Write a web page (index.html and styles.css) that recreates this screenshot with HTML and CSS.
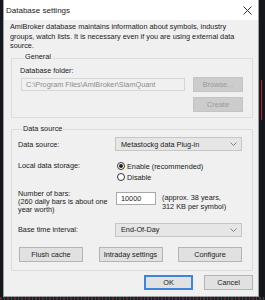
FILE: index.html
```html
<!DOCTYPE html>
<html lang="en">
<head>
  <meta charset="UTF-8">
  <title>Database settings</title>
  <link rel="stylesheet" href="styles.css">
</head>
<body>
  <div class="screen">
    <div class="dialog">
      <div class="titlebar">
        <span class="title">Database settings</span>
        <svg class="close" width="9" height="9" viewBox="0 0 9 9"><path d="M0.5 0.5 L8.5 8.5 M8.5 0.5 L0.5 8.5" stroke="#333" stroke-width="1"/></svg>
      </div>
      <div class="content">
        <p class="intro">AmiBroker database maintains information about symbols, industry<br>groups, watch lists. It is necessary even if you are using external data<br>source.</p>

        <div class="group general">
          <span class="legend">General</span>
          <div class="label">Database folder:</div>
          <div class="folder-row">
            <div class="textbox disabled">C:\Program Files\AmiBroker\SiamQuant</div>
            <div class="side-buttons">
              <button class="btn disabled">Browse...</button>
              <button class="btn disabled">Create</button>
            </div>
          </div>
        </div>

        <div class="group source">
          <span class="legend">Data source</span>
          <div class="row first">
            <div class="label">Data source:</div>
            <div class="combo">
              <span>Metastockg data Plug-in</span>
              <svg width="7" height="4" viewBox="0 0 7 4"><path d="M0.5 0.5 L3.5 3.5 L6.5 0.5" fill="none" stroke="#777" stroke-width="0.9"/></svg>
            </div>
          </div>
          <div class="row storage">
            <div class="label">Local data storage:</div>
            <div class="radios">
              <div class="radio-line"><span class="radio checked"></span>Enable (recommended)</div>
              <div class="radio-line"><span class="radio"></span>Disable</div>
            </div>
          </div>
          <div class="row bars">
            <div class="label">Number of bars:<br>(260 daily bars is about one<br>year worth)</div>
            <div class="textbox number">10000</div>
            <div class="note">(approx. 38 years,<br>312 KB per symbol)</div>
          </div>
          <div class="row interval">
            <div class="label">Base time interval:</div>
            <div class="combo">
              <span>End-Of-Day</span>
              <svg width="7" height="4" viewBox="0 0 7 4"><path d="M0.5 0.5 L3.5 3.5 L6.5 0.5" fill="none" stroke="#777" stroke-width="0.9"/></svg>
            </div>
          </div>
          <div class="button-row">
            <button class="btn">Flush cache</button>
            <button class="btn">Intraday settings</button>
            <button class="btn">Configure</button>
          </div>
        </div>

        <div class="footer">
          <button class="btn default">OK</button>
          <button class="btn">Cancel</button>
        </div>
      </div>
    </div>
    <div class="edge"></div>
  </div>
  <div class="strip"></div>
</body>
</html>
```

FILE: styles.css
```css
body {
  margin: 0;
  width: 265px;
  height: 300px;
  overflow: hidden;
  background: #14181d;
  font-family: 'Liberation Sans', Arial, sans-serif;
  font-size: 7.3px;
  color: #1a1a1a;
}
.screen {
  display: flex;
  height: 297px;
}
.dialog {
  margin-left: 3px;
  width: 256px;
  height: 297px;
  background: #f0f0f0;
  border: 1px solid #a0a0a0;
  border-top: none;
  box-sizing: border-box;
}
.edge {
  width: 1px;
  height: 40px;
  margin: 80px 0 0 2px;
  background: #b3262a;
}
.strip {
  height: 3px;
  background: repeating-linear-gradient(90deg, #5a2630 0 2px, #1a1e24 2px 4px, #2d4a48 4px 5px, #1a1e24 5px 7px);
}
.titlebar {
  height: 20px;
  background: #fff;
  display: flex;
  justify-content: space-between;
  align-items: center;
  padding: 0 6px 0 2px;
}
.title {
  font-size: 8px;
  color: #222;
}
.content {
  padding: 2px 5px 0 6px;
}
.intro {
  margin: 0;
  line-height: 9.5px;
  white-space: nowrap;
}

/* group boxes */
.group {
  border: 1px solid #dcdcdc;
  margin: 7.5px 0 0 1px;
}
.legend {
  display: block;
  width: max-content;
  line-height: 10px;
  height: 10px;
  margin: -7px 0 0 4px;
  padding: 0 1px;
  background: #f0f0f0;
}
.general {
  padding: 0 9px 5px 8px;
}
.general .label {
  margin: 3.5px 0 2.5px;
  line-height: 9px;
}
.folder-row {
  display: flex;
  align-items: flex-start;
  gap: 8px;
}
.textbox {
  height: 13px;
  box-sizing: border-box;
  border: 1px solid #b8b8b8;
  background: #fff;
  padding: 0 4px;
  line-height: 11px;
  white-space: nowrap;
}
.textbox.disabled {
  flex: 1;
  margin: 1px 0 0 1px;
  background: #f0f0f0;
  border-color: #d6d6d6;
  color: #8c8c8c;
}
.side-buttons {
  display: flex;
  flex-direction: column;
  gap: 5px;
}
.btn {
  font: inherit;
  height: 15px;
  padding: 0;
  background: #e1e1e1;
  border: 1px solid #b4b4b4;
  color: #1a1a1a;
}
.side-buttons .btn {
  width: 50px;
}
.btn.disabled {
  background: #cccccc;
  border-color: #c4c4c4;
  color: #9a9a9a;
}

.source {
  margin-top: 11px;
  padding: 0 10px 8px 6px;
}
.source .legend {
  margin-top: -6px;
}
.row {
  display: flex;
  align-items: center;
}
.row .label {
  width: 97px;
  flex: none;
  white-space: nowrap;
}
.row.first {
  margin-top: 3px;
}
.combo {
  width: 127px;
  height: 14px;
  box-sizing: border-box;
  border: 1px solid #c6c6c6;
  background: #e6e6e6;
  display: flex;
  justify-content: space-between;
  align-items: center;
  padding: 0 4px 0 5px;
}
.storage {
  margin-top: 9.5px;
  align-items: flex-start;
}
.storage .label {
  line-height: 9px;
  margin-top: 0.5px;
}
.radios {
  margin-left: 2px;
}
.radio-line {
  display: flex;
  align-items: center;
  gap: 2px;
  height: 11px;
}
.radio {
  width: 8px;
  height: 8px;
  box-sizing: border-box;
  border: 1px solid #333;
  border-radius: 50%;
  background: #fff;
  display: flex;
  align-items: center;
  justify-content: center;
}
.radio.checked::after {
  content: '';
  width: 4px;
  height: 4px;
  border-radius: 50%;
  background: #222;
}
.bars {
  margin-top: 7px;
  align-items: flex-start;
}
.bars .label {
  line-height: 8.4px;
}
.textbox.number {
  width: 40px;
  margin: 2.5px 0 0 1px;
  border-color: #a8a8a8;
}
.note {
  margin: 3px 0 0 6px;
  line-height: 9px;
  white-space: nowrap;
}
.interval {
  margin-top: 8px;
}
.button-row {
  display: flex;
  justify-content: space-between;
  margin: 10px 0 0 1px;
}
.button-row .btn {
  width: 64px;
}

.footer {
  display: flex;
  justify-content: flex-end;
  gap: 11px;
  margin-top: 4px;
}
.footer .btn {
  width: 49px;
}
.btn.default {
  border: 1px solid #3c85d8;
  box-shadow: inset 0 0 0 1px #3c85d8;
}
```
